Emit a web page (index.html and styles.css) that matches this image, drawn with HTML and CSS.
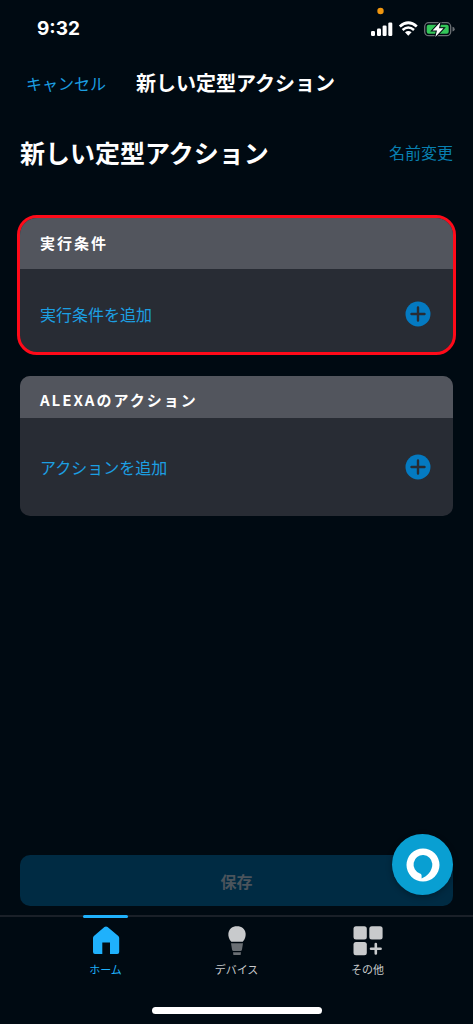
FILE: index.html
```
<!DOCTYPE html>
<html lang="ja">
<head>
<meta charset="utf-8">
<meta name="viewport" content="width=device-width, initial-scale=1">
<title>新しい定型アクション</title>
<link rel="stylesheet" href="styles.css">
</head>
<body>
<div class="status">
  <span class="status-time">9:32</span>
  <div class="status-icons">
    <svg class="status-svg" width="86" height="34" viewBox="0 0 86 34" aria-hidden="true">
      <circle cx="10.500" cy="4" r="3.200" fill="#f0960f"/>
      <g fill="#fff">
        <rect x="1" y="24" width="4" height="5" rx="1.200"/>
        <rect x="7" y="21.500" width="4" height="7.500" rx="1.200"/>
        <rect x="12.600" y="18.500" width="4" height="10.500" rx="1.200"/>
        <rect x="18.300" y="15.500" width="4" height="13.500" rx="1.200"/>
        <path d="M38.300 28.700 L35 25.300 Q38.300 22.800 41.600 25.300 Z"/>
      </g>
      <path d="M29.800 19.500 Q38.300 12 46.800 19.500" fill="none" stroke="#fff" stroke-width="2.700"/>
      <path d="M32.600 23 Q38.300 18 44 23" fill="none" stroke="#fff" stroke-width="2.500"/>
      <rect x="54.700" y="15.700" width="26" height="13" rx="4" fill="none" stroke="#6b7075" stroke-width="1.300"/>
      <rect x="56.700" y="17.700" width="22" height="9" rx="2" fill="#34c759"/>
      <path d="M82.500 19.800 Q84.700 20.300 84.700 22.200 Q84.700 24.100 82.500 24.600Z" fill="#6b7075"/>
      <path d="M70.500 15 L62.500 23.500 H67 L65.300 30 L73.500 21.200 H69 Z" fill="#fff" stroke="#000a12" stroke-width="2" paint-order="stroke"/>
    </svg>
  </div>
</div>
<header class="navbar">
  <button class="link-button" type="button">キャンセル</button>
  <span class="navbar-title">新しい定型アクション</span>
</header>
<main class="content">
  <div class="heading">
    <h1 class="heading-title">新しい定型アクション</h1>
    <button class="link-button rename" type="button">名前変更</button>
  </div>
  <section class="card highlighted">
    <h2 class="card-title">実行条件</h2>
    <button class="card-row" type="button">
      <span>実行条件を追加</span>
      <svg width="26" height="26" viewBox="0 0 26 26" aria-hidden="true"><circle cx="13" cy="13" r="12.500" fill="#047ac1"/><path d="M13 6.500V19.500M6.500 13H19.500" stroke="#272c34" stroke-width="2.400" stroke-linecap="round"/></svg>
    </button>
  </section>
  <section class="card">
    <h2 class="card-title">ALEXAのアクション</h2>
    <button class="card-row" type="button">
      <span>アクションを追加</span>
      <svg width="26" height="26" viewBox="0 0 26 26" aria-hidden="true"><circle cx="13" cy="13" r="12.500" fill="#047ac1"/><path d="M13 6.500V19.500M6.500 13H19.500" stroke="#272c34" stroke-width="2.400" stroke-linecap="round"/></svg>
    </button>
  </section>
</main>
<div class="save-area">
  <button class="save" type="button" disabled>保存</button>
  <button class="alexa" type="button" aria-label="Alexa">
    <svg width="34" height="34" viewBox="0 0 34 34" aria-hidden="true"><path fill="#fff" fill-rule="evenodd" d="M17 .5A16.500 16.500 0 1 1 17 33.500A16.500 16.500 0 1 1 17 .5ZM15.600 30.400V27.600C15.600 26.500 14.900 25.800 13.900 25.400A9.400 9.400 0 1 1 26.300 15.700C26.700 23 20.500 28.600 15.600 30.400Z"/></svg>
  </button>
</div>
<nav class="tabs">
  <a class="tab active" href="#home">
    <svg width="30" height="30" viewBox="0 0 30 30" aria-hidden="true"><path fill="#1fb1fc" d="M13.400 1.100Q15 0 16.600 1.100L27.300 10Q28.200 10.800 28.200 12V26Q28.200 28 26.200 28H19V16.500H11.300V28H4Q2 28 2 26V12Q2 10.800 2.900 10Z"/></svg>
    <span>ホーム</span>
  </a>
  <a class="tab" href="#devices">
    <svg width="30" height="30" viewBox="0 0 30 30" aria-hidden="true"><path fill="#c8cacc" d="M9.300 15.800C4.500 11 5 .3 15 .3S25.500 11 20.700 15.800Z"/><path fill="#6a6f74" d="M9 17.200H21L20 23.500Q19.700 25 18.500 25H11.500Q10.300 25 10 23.500ZM11 26.300H19L18.600 29H11.400Z"/></svg>
    <span>デバイス</span>
  </a>
  <a class="tab" href="#more">
    <svg width="30" height="30" viewBox="0 0 30 30" aria-hidden="true"><g fill="#c8cacc"><rect x=".5" y=".2" width="13.300" height="13.300" rx="2.500"/><rect x="16.300" y=".2" width="13.300" height="13.300" rx="2.500"/><rect x=".5" y="16" width="13.300" height="13.300" rx="2.500"/></g><path d="M22.800 18V27.500M18 22.700H27.600" stroke="#c8cacc" stroke-width="2.600" stroke-linecap="round"/></svg>
    <span>その他</span>
  </a>
</nav>
<div class="home-indicator"></div>
</body>
</html>
```
FILE: styles.css
```
* {
  box-sizing: border-box;
}

body {
  display: flex;
  flex-direction: column;
  min-height: 100vh;
  margin: 0;
  background: #000a12;
  color: #fff;
  font-family: "Noto Sans CJK JP", sans-serif;
  font-size: 16px;
  line-height: 24px;
}

button {
  border: 0;
  padding: 0;
  background: none;
  color: inherit;
  font: inherit;
}

svg {
  display: block;
  flex: none;
}

.status {
  display: flex;
  justify-content: space-between;
  height: 58px;
  padding: 7px 17px 0 37px;
}

.status-time {
  padding-top: 10px;
  font-family: Inter, sans-serif;
  font-size: 19px;
  font-weight: 700;
}

.navbar {
  display: flex;
  align-items: center;
  gap: 30px;
  height: 50px;
  padding: 0 26px;
}

.link-button {
  color: #1c9fe2;
}

.navbar-title {
  font-size: 20px;
  font-weight: 700;
}

.content {
  display: flex;
  flex: 1;
  flex-direction: column;
  gap: 21px;
  padding: 24px 20px 20px;
}

.heading {
  display: flex;
  align-items: center;
  justify-content: space-between;
  margin-bottom: 22px;
}

.heading-title {
  margin: 0;
  font-size: 25px;
  font-weight: 700;
  line-height: 40px;
}

.rename {
  color: #087fb0;
}

.card {
  overflow: hidden;
  border-radius: 10px;
  background: #282c34;
}

.card-title {
  margin: 0;
  padding: 12px 20px 6px;
  background: #52555d;
  font-size: 15px;
  font-weight: 700;
  line-height: 24px;
  letter-spacing: 2px;
}

.card-row {
  display: flex;
  align-items: center;
  justify-content: space-between;
  width: 100%;
  height: 98px;
  padding: 0 22px 0 20px;
  color: #1c9fe2;
}

.highlighted {
  margin: 0 -3px;
  border: 3px solid #ff0a19;
  border-radius: 20px;
}

.highlighted .card-title {
  padding: 13px 20px 14px;
}

.highlighted .card-row {
  height: 83px;
  padding-top: 6px;
}

.save-area {
  position: relative;
  padding: 0 20px 9px;
}

.save {
  display: block;
  width: 100%;
  height: 51px;
  border-radius: 10px;
  background: #002b43;
  color: #4b545c;
  font-weight: 700;
}

.alexa {
  position: absolute;
  right: 20px;
  bottom: 20px;
  display: grid;
  place-items: center;
  width: 61px;
  height: 61px;
  border-radius: 50%;
  background: #099fd2;
  box-shadow: 0 2px 6px rgba(0, 0, 0, 0.3);
}

.tabs {
  display: grid;
  grid-template-columns: repeat(3, 1fr);
  padding: 0 40px;
  border-top: 2px solid #1a2028;
}

.tab {
  position: relative;
  display: flex;
  flex-direction: column;
  align-items: center;
  gap: 4px;
  padding-top: 9px;
  color: #c8cacc;
  font-size: 11px;
  line-height: 18px;
  text-decoration: none;
}

.active {
  color: #1fb1fc;
}

.active::before {
  content: "";
  position: absolute;
  top: -2px;
  width: 45px;
  height: 3px;
  border-radius: 2px;
  background: #1fb1fc;
}

.home-indicator {
  width: 170px;
  height: 7px;
  margin: 29px auto 10px;
  border-radius: 4px;
  background: #fff;
}
```
